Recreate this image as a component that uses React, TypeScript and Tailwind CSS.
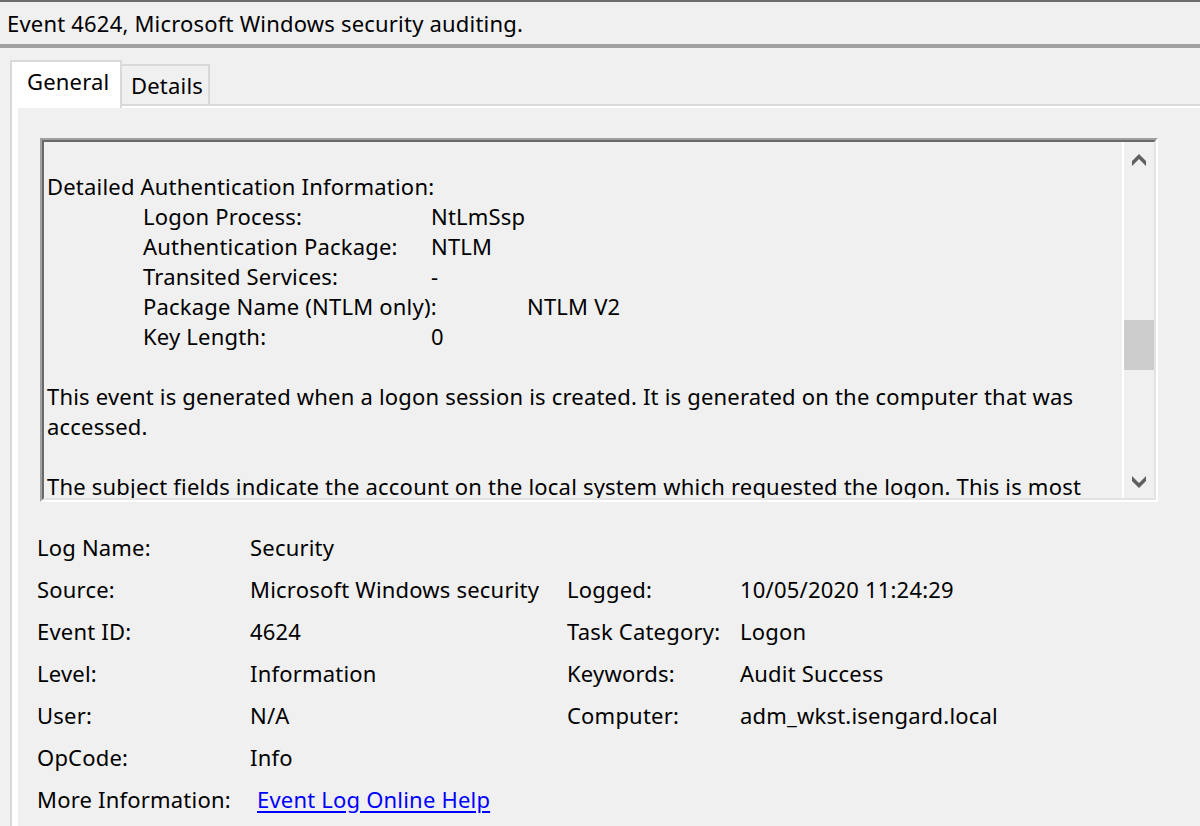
import React from "react";

const ChevronUp = () => (
  <svg width="14" height="12" viewBox="0 0 14 12" className="block">
    <path d="M7 0 L14 7 L14 12 L7 5 L0 12 L0 7 Z" fill="#606060" />
  </svg>
);
const ChevronDown = () => (
  <svg width="14" height="12" viewBox="0 0 14 12" className="block">
    <path d="M7 12 L14 5 L14 0 L7 7 L0 0 L0 5 Z" fill="#606060" />
  </svg>
);

type Row = { label: string; value: string; wide?: boolean };
const authRows: Row[] = [
  { label: "Logon Process:", value: "NtLmSsp" },
  { label: "Authentication Package:", value: "NTLM" },
  { label: "Transited Services:", value: "-" },
  { label: "Package Name (NTLM only):", value: "NTLM V2", wide: true },
  { label: "Key Length:", value: "0" },
];

const Line = ({ children }: { children?: React.ReactNode }) => (
  <div className="h-[30px] whitespace-pre">{children ?? "\u00a0"}</div>
);

export default function App() {
  return (
    <div className="w-[1200px] h-[826px] overflow-hidden bg-[#f0f0f0] text-black font-['Noto_Sans',sans-serif] text-[22px] tracking-[0.2px]">
      <div className="h-[2px] bg-[#6d6d6d]" />
      <div className="h-[42px] pl-[7px] flex items-center leading-none">
        Event 4624, Microsoft Windows security auditing.
      </div>
      <div className="h-[4px] bg-[#a0a0a0]" />
      <div className="pl-[10px] pt-[12px]">
        {/* tabs */}
        <div className="flex h-[44px] items-start">
          <div className="relative z-10 h-[48px] w-[112px] border-2 border-b-0 border-[#d9d9d9] bg-white pl-[15px] pt-[4px] leading-[30px]">
            General
          </div>
          <div className="mt-[4px] -ml-[2px] h-[42px] w-[90px] border-2 border-[#d9d9d9] bg-[#f0f0f0] pl-[9px] pt-[4px] leading-[30px]">
            Details
          </div>
        </div>
        {/* panel */}
        <div className="h-[740px] border-l-2 border-t-2 border-[#d9d9d9]">
          <div className="h-full border-l-[6px] border-t-2 border-white pl-[19px] pt-[30px]">
            {/* text box */}
            <div className="ml-[3px] w-[1118px] h-[364px] border-2 border-t-[#a0a0a0] border-l-[#a0a0a0] border-r-white border-b-white">
              <div className="flex h-full border-2 border-t-[#696969] border-l-[#696969] border-r-[#e3e3e3] border-b-[#e3e3e3]">
                <div className="flex-1 overflow-hidden pl-[3px] leading-[30px]">
                  <div className="-mt-px">
                    <Line />
                    <Line>Detailed Authentication Information:</Line>
                    {authRows.map((r) => (
                      <div key={r.label} className="flex h-[30px] whitespace-pre pl-[96px]">
                        <div className={r.wide ? "w-[384px]" : "w-[288px]"}>{r.label}</div>
                        <div>{r.value}</div>
                      </div>
                    ))}
                    <Line />
                    <Line>
                      This event is generated when a logon session is created. It is generated on the computer that was
                    </Line>
                    <Line>accessed.</Line>
                    <Line />
                    <Line>
                      The subject fields indicate the account on the local system which requested the logon. This is most
                    </Line>
                  </div>
                </div>
                <div className="w-[32px] h-full border-l-2 border-white flex flex-col items-center">
                  <div className="mt-[12px]">
                    <ChevronUp />
                  </div>
                  <div className="mt-[154px] h-[50px] w-[30px] bg-[#cdcdcd]" />
                  <div className="mt-[106px]">
                    <ChevronDown />
                  </div>
                </div>
              </div>
            </div>
            {/* fields */}
            <div className="mt-[24px] grid grid-cols-[213px_317px_173px_auto] auto-rows-[42px] items-center leading-[30px] whitespace-nowrap">
              <div>Log Name:</div>
              <div>Security</div>
              <div />
              <div />
              <div>Source:</div>
              <div>Microsoft Windows security</div>
              <div>Logged:</div>
              <div>10/05/2020 11:24:29</div>
              <div>Event ID:</div>
              <div>4624</div>
              <div>Task Category:</div>
              <div>Logon</div>
              <div>Level:</div>
              <div>Information</div>
              <div>Keywords:</div>
              <div>Audit Success</div>
              <div>User:</div>
              <div>N/A</div>
              <div>Computer:</div>
              <div>adm_wkst.isengard.local</div>
              <div>OpCode:</div>
              <div>Info</div>
              <div />
              <div />
              <div>More Information:</div>
              <div className="pl-[7px]">
                <span className="text-[#0000ff] underline underline-offset-[3px]">Event Log Online Help</span>
              </div>
              <div />
              <div />
            </div>
          </div>
        </div>
      </div>
    </div>
  );
}
